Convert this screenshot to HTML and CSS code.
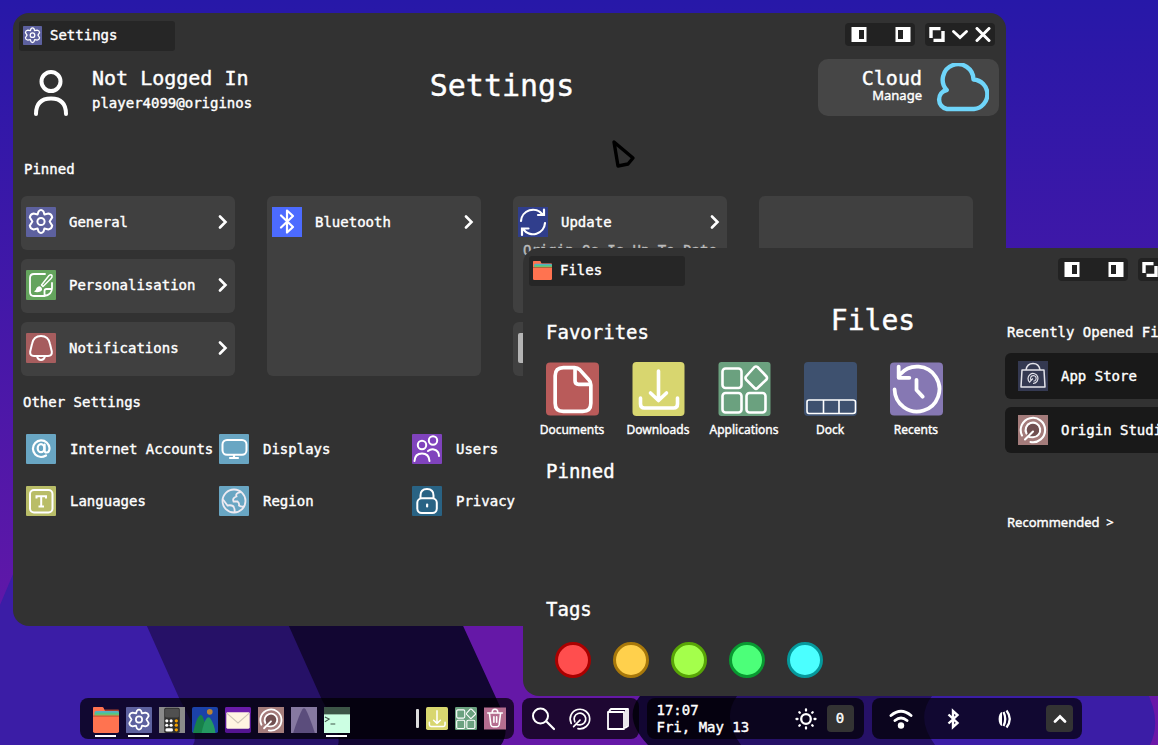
FILE: index.html
```html
<!DOCTYPE html>
<html lang="en">
<head>
<meta charset="utf-8">
<meta name="viewport" content="width=device-width, initial-scale=1">
<title>Origin OS</title>
<link rel="stylesheet" href="styles.css">
</head>
<body>
<svg class="defs" aria-hidden="true">
  <symbol id="gear" viewBox="0 0 30 30"><rect width="30" height="30" rx="1" fill="#5d619f"/><g fill="none" stroke="#fff" stroke-width="2" stroke-linejoin="round"><path d="M12.6 4.3Q15 1.6 17.4 4.3L18.4 7.4L22.4 6.6Q25.8 7.2 26.2 10.4L23.6 14.5L26.2 18.6Q25.8 21.8 22.4 22.4L18.4 21.6L17.4 24.7Q15 27.4 12.6 24.7L11.6 21.6L7.6 22.4Q4.2 21.8 3.8 18.6L6.4 14.5L3.8 10.4Q4.2 7.2 7.6 6.6L11.6 7.4Z"/><circle cx="15" cy="14.5" r="3.6"/></g></symbol>
  <symbol id="brush" viewBox="0 0 30 30"><rect width="30" height="30" rx="1" fill="#64a45d"/><g fill="none" stroke="#fff" stroke-width="1.8" stroke-linecap="round" stroke-linejoin="round"><path d="M19 4H8Q4 4 4 8V22Q4 26 8 26H18Q26 25 26 18V13M18.500 26V21Q18.500 19 20.500 19H26"/><path d="M15.500 15L23 5.500Q25 4 26 5.500Q26.500 7 25 8.500L17 16.500Z" stroke-width="1.500"/></g><path d="M8 21.500Q10 21 10.500 18Q13 15 15.500 17.500Q17 20 14.500 21.500Q11 23 8 21.500Z" fill="#fff"/></symbol>
  <symbol id="bell" viewBox="0 0 30 30"><rect width="30" height="30" rx="1" fill="#a65d5e"/><g fill="none" stroke="#fff" stroke-width="2" stroke-linejoin="round"><path d="M15 3Q7.500 3 6 11L4.200 18.500Q3.700 23 8 23H22Q26.300 23 25.800 18.500L24 11Q22.500 3 15 3Z"/><path d="M11 23.500Q12 27 15 27T19 23.500"/></g></symbol>
  <symbol id="bt" viewBox="0 0 30 30"><rect width="30" height="30" fill="#4c6bff"/><path d="M9 8.500L21 20L15 25.500V3.500L21 9L9 20.500" fill="none" stroke="#fff" stroke-width="2.200" stroke-linejoin="round" stroke-linecap="round"/></symbol>
  <symbol id="update" viewBox="0 0 30 30"><rect width="30" height="30" fill="#303e8c"/><path d="M3 14A12 12 0 0 1 24.500 7.500M26 2.500V8H20M27 16A12 12 0 0 1 5.500 22.500M4 28V21.500H10.500" fill="none" stroke="#fff" stroke-width="2.200" stroke-linecap="round"/></symbol>
  <symbol id="at" viewBox="0 0 30 30"><rect width="30" height="30" rx="1" fill="#69a6c3"/><g fill="none" stroke="#fff" stroke-width="2.200" stroke-linecap="round"><path d="M20 21.500Q17.500 23 15 23A8.300 8.300 0 1 1 23.500 14Q23.500 18.500 20.500 18.500Q18.600 18.500 18.600 16.500V10.500"/><ellipse cx="15" cy="14.200" rx="3.300" ry="4"/></g></symbol>
  <symbol id="display" viewBox="0 0 30 30"><rect width="30" height="30" rx="1" fill="#69a6c3"/><rect x="3.500" y="6" width="24" height="14.800" rx="4.500" fill="none" stroke="#fff" stroke-width="2"/><path d="M15 21V24M11 24H19" stroke="#fff" stroke-width="2.200" stroke-linecap="round"/></symbol>
  <symbol id="users" viewBox="0 0 30 30"><rect width="30" height="30" rx="1" fill="#8043bd"/><g fill="none" stroke="#fff" stroke-width="2" stroke-linecap="round"><circle cx="10" cy="11" r="4.200"/><circle cx="21" cy="6.500" r="4.200"/><path d="M2.500 27Q3 19.500 10 19.500T17.500 27M16 17Q19 14.500 22 15.500Q27 17 27 22"/></g></symbol>
  <symbol id="lang" viewBox="0 0 30 30"><rect width="30" height="30" rx="1" fill="#b9bd68"/><rect x="4" y="4" width="22.500" height="22.500" rx="4" fill="none" stroke="#fff" stroke-width="2"/><path d="M10.500 12.500V10.200H20V12.500M15.200 10.500V20.500M12.500 20.500H18" fill="none" stroke="#fff" stroke-width="2"/></symbol>
  <symbol id="globe" viewBox="0 0 30 30"><rect width="30" height="30" rx="1" fill="#69a6c3"/><g fill="none" stroke="#eeeaf1" stroke-width="1.800"><circle cx="15" cy="15" r="11.500"/><path d="M22 6Q16 7 17.500 10.500Q13 12 14.500 15.500H18.500Q20.500 17 20 19.500Q22 21 25 20.500M4 13.500L8.500 19.500Q14 18.500 15 21.500Q16 24 15.500 26.500"/></g></symbol>
  <symbol id="lock" viewBox="0 0 30 30"><rect width="30" height="30" rx="1" fill="#296384"/><g fill="none" stroke="#fff" stroke-width="2"><rect x="5.300" y="12.300" width="19.500" height="14.700" rx="4.500"/><path d="M8.500 12V9.500Q8.500 3 15 3T21.500 9.500V12"/></g><rect x="14" y="17.500" width="2.200" height="4" rx="1" fill="#fff"/></symbol>
  <symbol id="folder" viewBox="0 0 30 30"><path d="M8 3H29Q30 3 30 4V12H8Z" fill="#a8402e"/><path d="M0 1Q0 0 1 0H11Q12.500 0 13 3L14 5L5 12H0Z" fill="#ff7350"/><path d="M2 12V6Q2 4.500 4 4.500H28Q30 4.500 30 6V12Z" fill="#5aaec3"/><path d="M2 6.500H30V12H2Z" fill="#4cc98a"/><path d="M2 8.700H30V12H2Z" fill="#a6ad55"/><path d="M0 10H30V12H0Z" fill="#b5442f"/><path d="M0 11H30V28Q30 30 28 30H2Q0 30 0 28Z" fill="#ff7350"/></symbol>
  <symbol id="doc" viewBox="0 0 52 52"><rect width="52" height="52" rx="4" fill="#b95b5a"/><g fill="none" stroke="#fff" stroke-width="3.600" stroke-linejoin="round"><path d="M17 5H28Q31 5 33 7L42 17Q44 19 44 22V40Q44 48 36 48H17Q9 48 9 40V13Q9 5 17 5Z"/><path d="M28.500 5V18Q28.500 21.500 32 21.500H43.500"/></g></symbol>
  <symbol id="download" viewBox="0 0 52 54"><rect width="52" height="54" rx="4" fill="#d8d66f"/><path d="M26 9V38M18 31L26 38.500L34 31M8 36V42Q8 46 12 46H41Q45 46 45 42V36" fill="none" stroke="#fff" stroke-width="3.600" stroke-linecap="round" stroke-linejoin="round"/></symbol>
  <symbol id="apps" viewBox="0 0 52 54"><rect width="52" height="54" rx="3" fill="#6ba17f"/><g fill="none" stroke="#fff" stroke-width="2.600" stroke-linejoin="round"><rect x="4" y="6.500" width="19" height="19.500" rx="3"/><rect x="4" y="31" width="19" height="19.500" rx="3"/><rect x="28" y="31" width="19" height="19.500" rx="3"/><path d="M36 5Q37.500 4 39 5L48 14.500Q49 16 48 17.500L39 26Q37.500 27.500 36 26L27.500 17.500Q26.500 16 27.500 14.500Z"/></g></symbol>
  <symbol id="dock" viewBox="0 0 53 54"><rect width="53" height="54" rx="4" fill="#3e516f"/><path d="M5 38H49Q51.500 38 51.500 40V49Q51.500 51.500 49 51.500H5Q3 51.500 3 49V40Q3 38 5 38ZM19.500 38V51.500M35 38V51.500" fill="none" stroke="#fff" stroke-width="1.600"/></symbol>
  <symbol id="recent" viewBox="0 0 52 52"><rect width="52" height="52" rx="4" fill="#8678b3"/><path d="M4.500 26.500A22 22 0 1 0 10 11.500M8.500 4V15H19M26 17V27L32 33.500" fill="none" stroke="#fff" stroke-width="3.700" stroke-linecap="round" stroke-linejoin="round"/></symbol>
  <symbol id="swirl" viewBox="0 0 30 30"><g fill="none" stroke="#fff" stroke-width="2.100" stroke-linecap="round"><path d="M4 20.500A12.200 12.200 0 1 1 12.500 27"/><path d="M8.500 18.500A7.300 7.300 0 1 1 15 22.300L11.500 22M15 16.500L7 24.500"/></g></symbol>
  <symbol id="studio" viewBox="0 0 30 30"><rect width="30" height="30" fill="#a47c7b"/><circle cx="15" cy="15" r="7.500" fill="#704f50"/><use href="#swirl"/></symbol>
  <symbol id="store" viewBox="0 0 30 30"><rect width="30" height="30" fill="#343951"/><g fill="none" stroke="#e3e3e9" stroke-width="1.500"><path d="M4 9H26L27 26H3Z" stroke-linejoin="round"/><path d="M8 9Q9 2.500 15 2.500T22 9"/><path d="M12 21.500A5 5 0 1 1 15 22.500" stroke-width="1.200"/><path d="M13.500 19.500A2.800 2.800 0 1 1 15.500 20.200M15 17.500L11.500 21" stroke-width="1.100"/></g></symbol>
  <symbol id="calc" viewBox="0 0 30 30"><rect width="30" height="30" fill="#8b8b8b"/><rect x="6" y="1" width="18" height="29" rx="2" fill="#303030"/><rect x="7" y="2" width="16" height="10" rx="1.500" fill="#505050"/><g fill="#fff"><circle cx="9" cy="16" r="1.800"/><circle cx="14" cy="16" r="1.800"/><circle cx="9" cy="21" r="1.800"/><circle cx="14" cy="21" r="1.800"/><rect x="7.500" y="24.500" width="8.500" height="3.800" rx="1.500"/></g><g fill="#f5a300"><circle cx="20" cy="16" r="1.900"/><circle cx="20" cy="21" r="1.900"/><circle cx="20" cy="26.300" r="1.900"/></g></symbol>
  <symbol id="photos" viewBox="0 0 30 30"><rect width="30" height="30" rx="2" fill="#1b42a8"/><circle cx="20.500" cy="5.500" r="3.300" fill="#bd8434"/><path d="M1 30Q5 13 8.500 10Q10 8.500 12 10.500L20 30Z" fill="#178149"/><path d="M11 30Q14 16 17 13Q19 10.500 21 13Q26 20 27 30Z" fill="#249961"/></symbol>
  <symbol id="mail" viewBox="0 0 30 30"><rect width="30" height="30" rx="2" fill="#541491"/><rect width="30" height="8" rx="2" fill="#6a1bab"/><rect x="1.500" y="6" width="27" height="19" rx="1.500" fill="#fff4e2"/><path d="M2 7L15 18.500L28 7" fill="none" stroke="#cfc5b8" stroke-width="1.300"/></symbol>
  <symbol id="cone" viewBox="0 0 30 30"><rect width="30" height="30" fill="#8679a1"/><path d="M2.500 30Q9 10 13 3Q15 0 17 3Q21 10 27.500 30Z" fill="#5b4d7c"/></symbol>
  <symbol id="term" viewBox="0 0 30 30"><rect width="30" height="30" fill="#ccffe3"/><rect width="30" height="8.500" fill="#3d5547"/><path d="M1 11.500L6 14L1 17M7.500 19.500H13" fill="none" stroke="#41574b" stroke-width="1.200"/></symbol>
  <symbol id="trash" viewBox="0 0 24 24"><rect width="24" height="24" fill="#b56d8f"/><path d="M4 6H20M9 5Q9 2 12 2T15 5M6 7L7.500 19Q8 21 10 21H14Q16 21 16.500 19L18 7M10.800 10V16M13.800 10V16" fill="none" stroke="#fff" stroke-width="1.700" stroke-linecap="round"/></symbol>
  <symbol id="chev" viewBox="0 0 10 14"><path d="M2 1.500L7.500 7L2 12.500" fill="none" stroke="#fff" stroke-width="2.600" stroke-linecap="round"/></symbol>
  <symbol id="snapL" viewBox="0 0 15 15"><path fill-rule="evenodd" d="M0 0H15V15H0ZM7.500 3V12H12.500V3Z" fill="#fff"/></symbol>
  <symbol id="snapR" viewBox="0 0 15 15"><path fill-rule="evenodd" d="M0 0H15V15H0ZM2.500 3V12H7.500V3Z" fill="#fff"/></symbol>
  <symbol id="restore" viewBox="0 0 15 15"><path d="M1.500 11V1.500H11M13.500 4V13.500H4" fill="none" stroke="#fff" stroke-width="3.400"/></symbol>
  <symbol id="down" viewBox="0 0 16 15"><path d="M1.500 4.500L8 10.500L14.500 4.500" fill="none" stroke="#fff" stroke-width="2.800" stroke-linecap="round"/></symbol>
  <symbol id="close" viewBox="0 0 15 15"><path d="M1.500 1.500L13.500 13.500M13.500 1.500L1.500 13.500" stroke="#fff" stroke-width="3" stroke-linecap="round"/></symbol>
</svg>

<div class="desktop">
  <svg class="wallpaper" viewBox="0 0 1158 745" preserveAspectRatio="none" aria-hidden="true">
    <defs><linearGradient id="sky" x1="0" y1="0" x2="0" y2="1"><stop offset="0" stop-color="#2718a8"/><stop offset="1" stop-color="#6c17a8"/></linearGradient></defs>
    <rect width="1158" height="745" fill="url(#sky)"/>
    <path d="M0 605L40 510H1060L1146 690Q1162 720 1150 745H0Z" fill="#3b1da6"/>
    <path d="M95 510L180 700Q200 735 193 745H935Q915 718 932 696V510Z" fill="#261167"/>
    <path d="M237 510L322 700Q342 735 338 745H741Q721 718 737 696V510Z" fill="#120632"/>
    <path d="M410 510L497 700Q512 730 501 745H648Q622 718 640 696V510Z" fill="#6518a7"/>
  </svg>

  <section class="window settings" aria-label="Settings">
    <div class="titlebar">
      <button class="tab"><svg class="tab-icon"><use href="#gear"/></svg>Settings</button>
      <div class="controls">
        <div class="strip snap"><button aria-label="Snap left"><svg><use href="#snapL"/></svg></button><button aria-label="Snap right"><svg><use href="#snapR"/></svg></button></div>
        <div class="strip"><button aria-label="Restore"><svg><use href="#restore"/></svg></button><button aria-label="Minimise"><svg><use href="#down"/></svg></button><button aria-label="Close"><svg><use href="#close"/></svg></button></div>
      </div>
    </div>
    <header class="header">
      <div class="account">
        <svg class="avatar" viewBox="0 0 34 46" aria-hidden="true"><g fill="none" stroke="#fff" stroke-width="4"><circle cx="17" cy="11.500" r="9.500"/><path d="M2 44Q2 28.500 17 28.500T32 44" stroke-linecap="round"/></g></svg>
        <div><div class="name">Not Logged In</div><div>player4099@originos</div></div>
      </div>
      <h1>Settings</h1>
      <button class="cloud"><span class="cloud-text"><span class="name">Cloud</span><span class="manage">Manage</span></span>
        <svg viewBox="0 0 53 49" aria-hidden="true"><path d="M11 46H38A14.800 14.800 0 0 0 37.500 16.500A15.400 15.400 0 1 0 10.700 27A9.700 9.700 0 0 0 11 46Z" fill="none" stroke="#6fd5fa" stroke-width="4.400" stroke-linejoin="round"/></svg>
      </button>
    </header>
    <h2>Pinned</h2>
    <div class="cards">
      <button class="card"><svg class="icon"><use href="#gear"/></svg><span>General</span><svg class="chev"><use href="#chev"/></svg></button>
      <button class="card tall"><svg class="icon"><use href="#bt"/></svg><span>Bluetooth</span><svg class="chev"><use href="#chev"/></svg></button>
      <button class="card double"><svg class="icon"><use href="#update"/></svg><span>Update</span><svg class="chev"><use href="#chev"/></svg><span class="status">Origin Os Is Up To Date</span></button>
      <div class="card tall"></div>
      <button class="card"><svg class="icon"><use href="#brush"/></svg><span>Personalisation</span><svg class="chev"><use href="#chev"/></svg></button>
      <button class="card"><svg class="icon"><use href="#bell"/></svg><span>Notifications</span><svg class="chev"><use href="#chev"/></svg></button>
      <div class="card"><i class="icon blank"></i></div>
    </div>
    <h2 class="other-title">Other Settings</h2>
    <div class="others">
      <button><svg class="icon"><use href="#at"/></svg>Internet Accounts</button>
      <button><svg class="icon"><use href="#display"/></svg>Displays</button>
      <button><svg class="icon"><use href="#users"/></svg>Users</button>
      <button><svg class="icon"><use href="#lang"/></svg>Languages</button>
      <button><svg class="icon"><use href="#globe"/></svg>Region</button>
      <button><svg class="icon"><use href="#lock"/></svg>Privacy</button>
    </div>
  </section>

  <section class="window files" aria-label="Files">
    <div class="titlebar">
      <button class="tab"><svg class="tab-icon"><use href="#folder"/></svg>Files</button>
      <div class="controls">
        <div class="strip snap"><button aria-label="Snap left"><svg><use href="#snapL"/></svg></button><button aria-label="Snap right"><svg><use href="#snapR"/></svg></button></div>
        <div class="strip"><button aria-label="Restore"><svg><use href="#restore"/></svg></button><button aria-label="Minimise"><svg><use href="#down"/></svg></button><button aria-label="Close"><svg><use href="#close"/></svg></button></div>
      </div>
    </div>
    <h1>Files</h1>
    <div class="files-body">
      <div class="places">
        <h2>Favorites</h2>
        <div class="favorites">
          <button><svg><use href="#doc"/></svg>Documents</button>
          <button><svg><use href="#download"/></svg>Downloads</button>
          <button><svg><use href="#apps"/></svg>Applications</button>
          <button><svg><use href="#dock"/></svg>Dock</button>
          <button><svg><use href="#recent"/></svg>Recents</button>
        </div>
        <h2 class="pinned">Pinned</h2>
        <h2>Tags</h2>
        <div class="tags">
          <button class="red" aria-label="Red"></button><button class="amber" aria-label="Amber"></button><button class="lime" aria-label="Lime"></button><button class="green" aria-label="Green"></button><button class="cyan" aria-label="Cyan"></button>
        </div>
      </div>
      <div class="recents">
        <h3>Recently Opened Files</h3>
        <button class="recent"><svg class="icon"><use href="#store"/></svg>App Store</button>
        <button class="recent"><svg class="icon"><use href="#studio"/></svg>Origin Studio</button>
        <a class="more" href="#recommended">Recommended &nbsp;&gt;</a>
      </div>
    </div>
  </section>

  <nav class="taskbar" aria-label="Taskbar">
    <div class="group launcher">
      <button class="open" aria-label="Files"><svg><use href="#folder"/></svg></button>
      <button class="open" aria-label="Settings"><svg><use href="#gear"/></svg></button>
      <button aria-label="Calculator"><svg><use href="#calc"/></svg></button>
      <button aria-label="Photos"><svg><use href="#photos"/></svg></button>
      <button aria-label="Mail"><svg><use href="#mail"/></svg></button>
      <button aria-label="Origin Studio"><svg><use href="#studio"/></svg></button>
      <button aria-label="Cone"><svg><use href="#cone"/></svg></button>
      <button class="open" aria-label="Terminal"><svg><use href="#term"/></svg></button>
      <div class="shortcuts">
        <i></i>
        <button aria-label="Downloads"><svg><use href="#download"/></svg></button>
        <button aria-label="Applications"><svg><use href="#apps"/></svg></button>
        <button aria-label="Trash"><svg><use href="#trash"/></svg></button>
      </div>
    </div>
    <div class="group tools">
      <button aria-label="Search"><svg viewBox="0 0 24 24"><path d="M16 15L23 22" stroke="#fff" stroke-width="2.200" stroke-linecap="round"/><circle cx="9.500" cy="9" r="7.500" fill="none" stroke="#fff" stroke-width="2"/></svg></button>
      <button aria-label="Origin"><svg><use href="#swirl"/></svg></button>
      <button aria-label="Windows"><svg viewBox="0 0 24 24"><path d="M2 5H18V22H2ZM3 4L5 2H22V19L19 21M20 3V20" fill="none" stroke="#fff" stroke-width="1.800" stroke-linejoin="round"/></svg></button>
    </div>
    <div class="group clock">
      <div>17:07<br>Fri, May 13</div>
      <button class="sun" aria-label="Brightness"><svg viewBox="0 0 22 22"><g fill="none" stroke="#fff" stroke-width="2.300" stroke-linecap="round"><circle cx="11" cy="11" r="4.800"/><path d="M11 1.500V2.500M11 19.500V20.500M1.500 11H2.500M19.500 11H20.500M4.300 4.300L4.800 4.800M17.200 17.200L17.700 17.700M4.300 17.700L4.800 17.200M17.200 4.800L17.700 4.300"/></g></svg></button>
      <button class="chip">0</button>
    </div>
    <div class="group status-icons">
      <button aria-label="Wi-Fi"><svg viewBox="0 0 24 22"><path d="M2 7.500Q12 -1 22 7.500M6 12.500Q12 7.500 18 12.500" fill="none" stroke="#fff" stroke-width="2.900" stroke-linecap="round"/><circle cx="12" cy="17.500" r="3.200" fill="#fff"/></svg></button>
      <button aria-label="Bluetooth"><svg viewBox="0 0 24 22"><path d="M7.500 6.500L16.500 15L12 19V3L16.500 7L7.500 15.500" fill="none" stroke="#fff" stroke-width="2.400"/></svg></button>
      <button aria-label="Sound"><svg viewBox="0 0 24 22"><path d="M8 4C3.500 5 3.500 17 8 18Z" fill="#fff"/><path d="M9.500 4Q13 11 9.500 18M12.500 2.500Q19 11 12.500 19.500" fill="none" stroke="#fff" stroke-width="2.300"/></svg></button>
      <button class="chip" aria-label="Expand"><svg viewBox="0 0 16 12"><path d="M3 8.500L8 3.500L13 8.500" fill="none" stroke="#fff" stroke-width="2.800" stroke-linecap="round"/></svg></button>
    </div>
  </nav>

  <svg class="cursor" viewBox="0 0 26 32" aria-hidden="true"><path d="M4 4L23 20L18 26L8 28Z" fill="none" stroke="#000" stroke-width="3.400" stroke-linejoin="round"/></svg>
</div>
</body>
</html>
```
FILE: styles.css
```css
* { box-sizing: border-box; }
body { margin: 0; font: 14px/18px "DejaVu Sans Mono", monospace; color: #fff; -webkit-text-stroke: 0.4px currentColor; }
button { font: inherit; color: inherit; background: none; border: 0; padding: 0; text-align: left; white-space: nowrap; cursor: pointer; }
h1, h2, h3 { margin: 0; font-weight: 400; }
h2, h3 { font-size: 14px; }
h1 { font-size: 30px; line-height: 36px; }
svg { display: block; flex: none; }
.defs { position: absolute; width: 0; height: 0; }
.desktop { position: relative; height: 100vh; overflow: hidden; background: #2718a8; }
.wallpaper { position: absolute; width: 100%; height: 100%; }
.cursor { position: absolute; left: 610px; top: 138px; width: 26px; height: 32px; pointer-events: none; }

.window { position: absolute; background: #323232; border-radius: 16px; }
.settings { left: 13px; top: 13px; width: 993px; height: 613px; padding: 8px 7px 8px 6px; }
.files { left: 523px; top: 248px; width: 700px; height: 448px; padding: 8px 6px; }

.titlebar { display: flex; justify-content: space-between; }
.tab { display: flex; align-items: center; gap: 8px; width: 156px; height: 30px; padding: 0 0 2px 4px; background: #262626; border-radius: 3px; }
.tab-icon { width: 19px; height: 19px; }
.controls { display: flex; gap: 10px; padding: 2px 4px 0 0; }
.files .controls { padding-right: 9px; }
.strip { display: flex; align-items: center; justify-content: space-between; width: 70px; height: 23px; padding: 0 4px; background: #222; border-radius: 4px; }
.snap { padding: 0 4px 0 6px; }
.strip svg { width: 16px; height: 15px; }

.header { display: grid; grid-template-columns: 1fr auto 1fr; margin-top: 8px; }
.header h1 { padding: 9px 14px 0 0; }
.account { display: flex; gap: 24px; padding: 11px 0 0 15px; line-height: 24px; }
.account > div { margin-top: -5px; }
.avatar { width: 34px; height: 46px; }
.name { font-size: 20px; line-height: 26px; }
.cloud { justify-self: end; display: flex; align-items: center; justify-content: flex-end; gap: 14px; width: 181px; height: 57px; padding-right: 10px; background: #464646; border-radius: 10px; text-align: right; }
.cloud-text { padding-bottom: 5px; }
.cloud-text > span { display: block; }
.cloud .name { line-height: 20px; }
.cloud svg { width: 53px; height: 49px; }
.manage, .favorites, .more { font-family: "Noto Sans", sans-serif; }
.manage { font-size: 13px; line-height: 14px; }

.settings h2 { margin: 44px 0 18px 5px; }
.cards { display: grid; grid-template-columns: repeat(4, 214px); grid-auto-rows: 54px; gap: 9px 32px; padding-left: 2px; grid-auto-flow: dense; }
.card { display: grid; grid-template-columns: 30px 1fr 10px; align-content: start; align-items: center; column-gap: 13px; padding: 11px 7px 0 5px; background: #404040; border-radius: 6px; }
.tall { grid-row: span 3; }
.double { grid-row: span 2; }
.icon { width: 30px; height: 30px; }
.blank { background: #b4b4b4; border-radius: 2px; }
.chev { width: 10px; height: 14px; }
.status { grid-column: 1 / -1; padding-left: 5px; line-height: 26px; color: #bbb; }
.settings .other-title { margin: 17px 0 23px 4px; }
.others { display: grid; grid-template-columns: repeat(3, 193px); gap: 22px 0; padding-left: 7px; }
.others button { display: flex; align-items: center; gap: 14px; }

.files h1 { margin-top: 17px; text-align: center; font-size: 28px; }
.files-body { display: grid; grid-template-columns: 476px 1fr; margin-top: -19px; }
.places h2 { margin-left: 17px; font-size: 19px; line-height: 24px; }
.favorites { display: grid; grid-template-columns: repeat(5, 86px); margin-top: 18px; }
.favorites button { display: flex; flex-direction: column; align-items: center; gap: 5px; font-size: 12px; }
.favorites svg { width: 53px; height: 54px; }
.places .pinned { margin-top: 20px; margin-bottom: 114px; }
.tags { display: flex; gap: 22px; padding: 21px 0 0 26px; }
.tags button { width: 36px; height: 36px; border: 3px solid; border-radius: 50%; }
.tags .red { background: #ff4e4e; border-color: #a00; }
.tags .amber { background: #ffd04c; border-color: #a8780a; }
.tags .lime { background: #a4ff4b; border-color: #58a606; }
.tags .green { background: #4cff79; border-color: #089a31; }
.tags .cyan { background: #4bffff; border-color: #05999c; }
.recents h3 { padding: 3px 0 12px 2px; }
.recent { display: flex; align-items: center; gap: 13px; width: 100%; height: 46px; margin-bottom: 8px; padding-left: 13px; background: #191919; border-radius: 6px; }
.more { display: block; padding: 52px 0 0 2px; font-size: 13px; color: inherit; text-decoration: none; }

.taskbar { position: absolute; left: 0; right: 0; bottom: 6px; display: flex; justify-content: center; gap: 8px; padding-left: 3px; }
.group { display: flex; align-items: center; height: 41px; border-radius: 8px; background: rgba(0, 0, 0, .7); }
.launcher { width: 434px; gap: 7px; padding: 0 8px 0 13px; }
.launcher > button { display: flex; flex-direction: column; align-items: center; gap: 2px; height: 30px; margin-top: 6px; }
.launcher > button > svg { width: 26px; height: 26px; }
.open::after { content: ""; width: 21px; height: 2px; background: #fff; }
.shortcuts { display: flex; align-items: center; gap: 7px; margin-left: auto; }
.shortcuts i { width: 3px; height: 19px; border-radius: 1px; background: #ddd; }
.shortcuts svg { width: 22px; height: 23px; }
.tools { width: 117px; justify-content: space-between; padding: 0 9px; }
.tools svg { width: 24px; height: 24px; }
.clock { width: 217px; gap: 18px; padding: 0 10px; line-height: 17px; }
.clock .sun { margin-left: auto; margin-right: -8px; }
.sun svg { width: 22px; height: 22px; }
.chip { display: grid; place-items: center; width: 27px; height: 27px; border-radius: 4px; background: #333; }
.chip svg { width: 16px; height: 12px; }
.status-icons { width: 210px; justify-content: space-between; padding: 0 8px 0 17px; }
.status-icons > button:not(.chip) svg { width: 24px; height: 22px; }
```
